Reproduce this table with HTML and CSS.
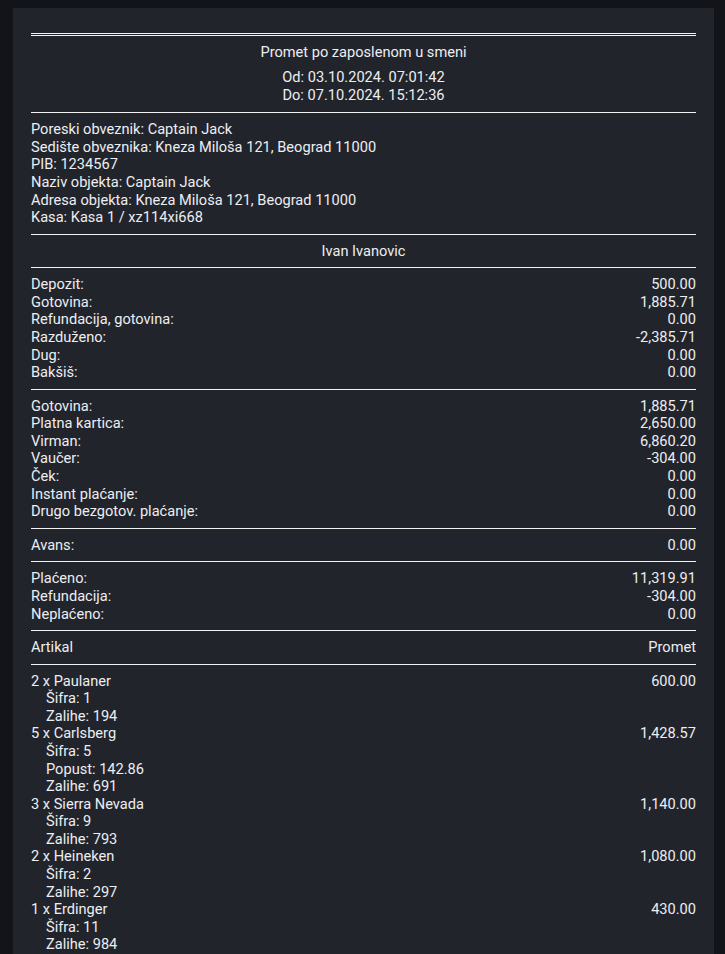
FILE: index.html
```html
<!DOCTYPE html>
<html lang="sr">
<head>
<meta charset="utf-8">
<title>Promet po zaposlenom u smeni</title>
<link rel="stylesheet" href="styles.css">
</head>
<body>
<div class="panel">
  <div class="report">
    <section class="sec head">
      <div class="title">Promet po zaposlenom u smeni</div>
      <div class="dates">
        <div>Od: 03.10.2024. 07:01:42</div>
        <div>Do: 07.10.2024. 15:12:36</div>
      </div>
    </section>
    <section class="sec">
      <div>Poreski obveznik: Captain Jack</div>
      <div>Sedište obveznika: Kneza Miloša 121, Beograd 11000</div>
      <div>PIB: 1234567</div>
      <div>Naziv objekta: Captain Jack</div>
      <div>Adresa objekta: Kneza Miloša 121, Beograd 11000</div>
      <div>Kasa: Kasa 1 / xz114xi668</div>
    </section>
    <section class="sec center">
      <div>Ivan Ivanovic</div>
    </section>
    <section class="sec">
      <div class="row"><span>Depozit:</span><span>500.00</span></div>
      <div class="row"><span>Gotovina:</span><span>1,885.71</span></div>
      <div class="row"><span>Refundacija, gotovina:</span><span>0.00</span></div>
      <div class="row"><span>Razduženo:</span><span>-2,385.71</span></div>
      <div class="row"><span>Dug:</span><span>0.00</span></div>
      <div class="row"><span>Bakšiš:</span><span>0.00</span></div>
    </section>
    <section class="sec">
      <div class="row"><span>Gotovina:</span><span>1,885.71</span></div>
      <div class="row"><span>Platna kartica:</span><span>2,650.00</span></div>
      <div class="row"><span>Virman:</span><span>6,860.20</span></div>
      <div class="row"><span>Vaučer:</span><span>-304.00</span></div>
      <div class="row"><span>Ček:</span><span>0.00</span></div>
      <div class="row"><span>Instant plaćanje:</span><span>0.00</span></div>
      <div class="row"><span>Drugo bezgotov. plaćanje:</span><span>0.00</span></div>
    </section>
    <section class="sec">
      <div class="row"><span>Avans:</span><span>0.00</span></div>
    </section>
    <section class="sec">
      <div class="row"><span>Plaćeno:</span><span>11,319.91</span></div>
      <div class="row"><span>Refundacija:</span><span>-304.00</span></div>
      <div class="row"><span>Neplaćeno:</span><span>0.00</span></div>
    </section>
    <section class="sec">
      <div class="row"><span>Artikal</span><span>Promet</span></div>
    </section>
    <section class="sec">
      <div class="item">
        <div class="row"><span>2 x Paulaner</span><span>600.00</span></div>
        <div class="sub">Šifra: 1</div>
        <div class="sub">Zalihe: 194</div>
      </div>
      <div class="item">
        <div class="row"><span>5 x Carlsberg</span><span>1,428.57</span></div>
        <div class="sub">Šifra: 5</div>
        <div class="sub">Popust: 142.86</div>
        <div class="sub">Zalihe: 691</div>
      </div>
      <div class="item">
        <div class="row"><span>3 x Sierra Nevada</span><span>1,140.00</span></div>
        <div class="sub">Šifra: 9</div>
        <div class="sub">Zalihe: 793</div>
      </div>
      <div class="item">
        <div class="row"><span>2 x Heineken</span><span>1,080.00</span></div>
        <div class="sub">Šifra: 2</div>
        <div class="sub">Zalihe: 297</div>
      </div>
      <div class="item">
        <div class="row"><span>1 x Erdinger</span><span>430.00</span></div>
        <div class="sub">Šifra: 11</div>
        <div class="sub">Zalihe: 984</div>
      </div>
    </section>
  </div>
</div>
</body>
</html>
```

FILE: styles.css
```css
html, body {
  margin: 0;
  padding: 0;
  background: #12141a;
}

body {
  font-family: Roboto, "Liberation Sans", sans-serif;
  font-size: 14.6px;
  line-height: 17.58px;
  color: #eceef1;
}

.panel {
  margin: 8px 11px 0 13px;
  background: #22242c;
  padding: 25px 18px 40px;
  min-height: 960px;
}

.sec {
  border-top: 1px solid #f2f2f2;
  padding: 8px 0 7px;
}

.sec.head {
  border-top: 3px double #f2f2f2;
  padding: 8px 0 8px;
  text-align: center;
}

.dates {
  margin-top: 7.5px;
}

.center {
  text-align: center;
}

.row {
  display: flex;
  justify-content: space-between;
}

.sub {
  padding-left: 15px;
}
```
